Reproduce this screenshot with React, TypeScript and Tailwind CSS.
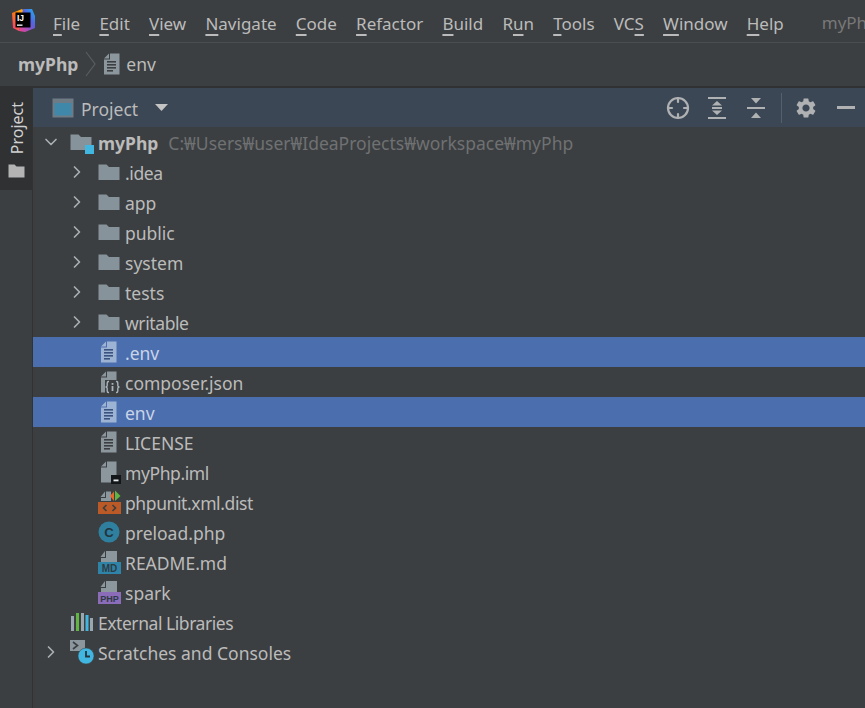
import type { ReactNode } from 'react'
import { Crosshair, ChevronDown, ChevronRight } from 'lucide-react'
import { MdSettings } from 'react-icons/md'

const menus: [string, string, string][] = [
  ['', 'F', 'ile'],
  ['', 'E', 'dit'],
  ['', 'V', 'iew'],
  ['', 'N', 'avigate'],
  ['', 'C', 'ode'],
  ['', 'R', 'efactor'],
  ['', 'B', 'uild'],
  ['R', 'u', 'n'],
  ['', 'T', 'ools'],
  ['VC', 'S', ''],
  ['', 'W', 'indow'],
  ['', 'H', 'elp'],
]

function Logo() {
  return (
    <svg width="24" height="24" viewBox="0 0 24 24">
      <defs>
        <linearGradient id="lg1" x1="0" y1="1" x2="1" y2="0">
          <stop offset="0" stopColor="#fc2f8f" />
          <stop offset="0.5" stopColor="#f97a12" />
          <stop offset="1" stopColor="#fdc80e" />
        </linearGradient>
        <linearGradient id="lg2" x1="0" y1="1" x2="1" y2="0">
          <stop offset="0" stopColor="#fc3f8f" />
          <stop offset="0.6" stopColor="#5a5fe0" />
          <stop offset="1" stopColor="#18b6f0" />
        </linearGradient>
      </defs>
      <path d="M1 5 L11 1 L14 4 L8 23 L2 20 Z" fill="url(#lg1)" />
      <path d="M8 23 L12 1 L21 1 L24 8 L24 20 L14 24 Z" fill="url(#lg2)" />
      <rect x="4.5" y="4.5" width="15" height="15" fill="#000" />
      <text x="6" y="12.5" fontSize="8.5" fontWeight="700" fill="#fff" fontFamily="'Liberation Sans', sans-serif">IJ</text>
      <rect x="6" y="16.5" width="5.5" height="1.3" fill="#fff" />
    </svg>
  )
}

function Folder({ color = '#87939a' }: { color?: string }) {
  return (
    <svg width="22" height="18" viewBox="0 0 22 18">
      <path d="M0.5 1.5 H8.5 L11 4 H21.5 V17 H0.5 Z" fill={color} />
    </svg>
  )
}

function PageBase({ children, color = '#8b969d' }: { children?: ReactNode; color?: string }) {
  return (
    <svg width="24" height="24" viewBox="0 0 24 24">
      <path d="M8 1.5 V6.5 H3 Z" fill={color} />
      <path d="M9 1.5 H18.5 V22.5 H3 V7.5 H9 Z" fill={color} />
      {children}
    </svg>
  )
}

function TextFile({ selected }: { selected?: boolean }) {
  const line = selected ? '#39527f' : '#3c3f41'
  return (
    <PageBase color={selected ? '#9db3d3' : '#8b969d'}>
      <rect x="6" y="9" width="9" height="1.6" fill={line} />
      <rect x="6" y="12" width="9" height="1.6" fill={line} />
      <rect x="6" y="15" width="9" height="1.6" fill={line} />
      <rect x="6" y="18" width="6" height="1.6" fill={line} />
    </PageBase>
  )
}

function JsonFile() {
  return (
    <svg width="24" height="24" viewBox="0 0 24 24">
      <path d="M8 1.5 V6.5 H3 Z" fill="#8b969d" />
      <path d="M9 1.5 H18.5 V10 H8 V22.5 H3 V7.5 H9 Z" fill="#8b969d" />
      <rect x="7" y="10" width="17" height="14" fill="#3c3f41" />
      <path d="M11 11.5 H10.5 Q9.2 11.5 9.2 13 V15.5 Q9.2 17 7.5 17 Q9.2 17 9.2 18.5 V21 Q9.2 22.5 10.5 22.5 H11 M18 11.5 H18.5 Q19.8 11.5 19.8 13 V15.5 Q19.8 17 21.5 17 Q19.8 17 19.8 18.5 V21 Q19.8 22.5 18.5 22.5 H18" stroke="#a9b4bb" strokeWidth="1.4" fill="none" />
      <rect x="13.6" y="13" width="1.8" height="1.8" fill="#a9b4bb" />
      <rect x="13.6" y="16" width="1.8" height="5" fill="#a9b4bb" />
    </svg>
  )
}

function ImlFile() {
  return (
    <PageBase>
      <rect x="13" y="15" width="10" height="9" fill="#14171a" />
      <rect x="15.5" y="19.5" width="5" height="1.8" fill="#e8e8e8" />
    </PageBase>
  )
}

function XmlFile() {
  return (
    <svg width="24" height="24" viewBox="0 0 24 24">
      <path d="M7 1.5 V7 H2.5 Z" fill="#8b969d" />
      <path d="M8 1.5 H13 V11 H3 V8 H8 Z" fill="#8b969d" />
      <path d="M12 6 L16 1.5 V11 Z" fill="#e8672b" />
      <path d="M17 0.5 L22.5 6 L17 11 Z" fill="#62b543" />
      <rect x="0" y="12" width="23" height="12" fill="#bb5a26" />
      <path d="M8.5 15 L5.5 18 L8.5 21 M14.5 15 L17.5 18 L14.5 21" stroke="#3c3f41" strokeWidth="1.6" fill="none" />
    </svg>
  )
}

function ClassFile() {
  return (
    <svg width="24" height="24" viewBox="0 0 24 24">
      <circle cx="11" cy="12" r="10.5" fill="#2f7f9e" />
      <text x="11" y="16.5" textAnchor="middle" fontSize="13" fontWeight="700" fill="#23343f" fontFamily="'Liberation Sans', sans-serif">C</text>
    </svg>
  )
}

function BadgeFile({ label, color, size }: { label: string; color: string; size: number }) {
  return (
    <svg width="24" height="24" viewBox="0 0 24 24">
      <path d="M7 1 V7 H2.5 Z" fill="#8b969d" />
      <path d="M8 1 H19 V12 H3 V8 H8 Z" fill="#8b969d" />
      <rect x="0" y="12" width="23" height="12" fill={color} />
      <text x="11.5" y="22" textAnchor="middle" fontSize={size} fontWeight="700" fill="#2d3b45" fontFamily="'Liberation Sans', sans-serif">{label}</text>
    </svg>
  )
}

function Libraries() {
  return (
    <svg width="24" height="24" viewBox="0 0 24 24">
      <rect x="1" y="6" width="3" height="15" fill="#9aa7b0" />
      <rect x="6" y="3" width="3" height="18" fill="#62b543" />
      <rect x="11" y="3" width="3" height="18" fill="#9aa7b0" />
      <rect x="15.5" y="5" width="3" height="16" fill="#40b6e0" />
      <rect x="20" y="8" width="3" height="13" fill="#9aa7b0" />
    </svg>
  )
}

function Scratches() {
  return (
    <svg width="26" height="26" viewBox="0 0 26 26">
      <path d="M1 1 H16 V12 H1 Z" fill="#8b969d" />
      <path d="M4 3 L8.5 6.5 L4 10" stroke="#3c3f41" strokeWidth="1.6" fill="none" />
      <circle cx="17" cy="17" r="8" fill="#40b6e0" stroke="#3c3f41" strokeWidth="0.5" />
      <path d="M17 12 V17.5 H21" stroke="#23343f" strokeWidth="1.8" fill="none" />
    </svg>
  )
}

const rows: { name: string; icon: ReactNode; selected?: boolean; folder?: boolean; tight?: boolean }[] = [
  { name: '.idea', icon: <Folder />, folder: true, tight: true },
  { name: 'app', icon: <Folder />, folder: true },
  { name: 'public', icon: <Folder />, folder: true },
  { name: 'system', icon: <Folder />, folder: true },
  { name: 'tests', icon: <Folder />, folder: true },
  { name: 'writable', icon: <Folder />, folder: true, tight: true },
  { name: '.env', icon: <TextFile selected />, selected: true },
  { name: 'composer.json', icon: <JsonFile /> },
  { name: 'env', icon: <TextFile selected />, selected: true },
  { name: 'LICENSE', icon: <TextFile /> },
  { name: 'myPhp.iml', icon: <ImlFile />, tight: true },
  { name: 'phpunit.xml.dist', icon: <XmlFile />, tight: true },
  { name: 'preload.php', icon: <ClassFile /> },
  { name: 'README.md', icon: <BadgeFile label="MD" color="#2f83a6" size={10} /> },
  { name: 'spark', icon: <BadgeFile label="PHP" color="#8a6cb8" size={9} /> },
]

export default function App() {
  return (
    <div className="w-[865px] h-[708px] overflow-hidden flex flex-col bg-[#3c3f41] text-[#bbbbbb] text-[17.5px] leading-[24px] font-['Noto_Sans','Open_Sans',sans-serif]">
      {/* menu bar */}
      <div className="h-[43px] shrink-0 flex items-center border-b border-[#4b4e50] pl-[11px] whitespace-nowrap overflow-hidden">
        <div className="w-[24px] h-[24px] mr-[18px] -mt-[2px]"><Logo /></div>
        <div className="flex gap-[19.2px] mt-[5px] text-[17px]">
          {menus.map(([pre, key, post]) => (
            <span key={key + post + pre}>
              {pre}
              <span className="underline decoration-2 underline-offset-[4px]">{key}</span>
              {post}
            </span>
          ))}
        </div>
        <span className="ml-[38px] text-[#787878] mt-[4px] text-[17px]">myPh</span>
      </div>

      {/* breadcrumb */}
      <div className="h-[45px] shrink-0 flex items-center pl-[18px] pb-[2px] border-b-2 border-[#2f3133]">
        <span className="font-bold">myPhp</span>
        <svg width="14" height="26" viewBox="0 0 14 26" className="ml-[6px] mr-[3px]">
          <path d="M2 1 L11 13 L2 25" stroke="#5a5d5f" strokeWidth="1.2" fill="none" />
        </svg>
        <TextFile />
        <span className="ml-[1px]">env</span>
      </div>

      <div className="flex-1 flex min-h-0">
        {/* tool window stripe */}
        <div className="w-[33px] shrink-0 border-r border-[#323232]">
          <div className="h-[102px] bg-[#2f3133] flex flex-col items-center pt-[14px] pl-[2px]">
            <span className="[writing-mode:vertical-rl] rotate-180 text-[16px] leading-[18px] text-[#d0d0d0]">Project</span>
            <svg width="17" height="14" viewBox="0 0 17 14" className="mt-[10px] -ml-[2px]">
              <path d="M0.5 0.5 H6.5 L8.5 2.5 H16.5 V13.5 H0.5 Z" fill="#b4b4b4" />
            </svg>
          </div>
        </div>

        <div className="flex-1 min-w-0 flex flex-col">
          {/* project header */}
          <div className="h-[39px] shrink-0 flex items-center bg-[#3b4754] pl-[19px] pr-[10px]">
            <svg width="22" height="20" viewBox="0 0 22 20" className="mr-[7px]">
              <rect x="0.5" y="0.5" width="21" height="19" fill="#6e7b85" />
              <rect x="2.5" y="5" width="17" height="12.5" fill="#3f88aa" />
            </svg>
            <span className="mt-[2px]">Project</span>
            <svg width="13" height="7" viewBox="0 0 13 7" className="ml-[17px]">
              <path d="M0 0 H13 L6.5 7 Z" fill="#c4c4c4" />
            </svg>
            <div className="ml-auto flex items-center text-[#afb1b3]">
              <Crosshair size={24} strokeWidth={2.2} />
              <svg width="20" height="22" viewBox="0 0 20 22" className="ml-[17px]">
                <rect x="1" y="0" width="18" height="2" fill="#afb1b3" />
                <rect x="1" y="20" width="18" height="2" fill="#afb1b3" />
                <rect x="5" y="10" width="10" height="2" fill="#afb1b3" />
                <path d="M10 4 L15 8.5 H5 Z M10 18 L15 13.5 H5 Z" fill="#afb1b3" />
              </svg>
              <svg width="20" height="22" viewBox="0 0 20 22" className="ml-[19px]">
                <rect x="1" y="10" width="18" height="2" fill="#afb1b3" />
                <path d="M5 1 H15 L10 6.5 Z M5 21 H15 L10 15.5 Z" fill="#afb1b3" />
              </svg>
              <div className="w-px h-[30px] bg-[#55606b] ml-[15px]" />
              <MdSettings size={24} className="ml-[12px]" />
              <div className="w-[18px] h-[2.5px] bg-[#afb1b3] ml-[19px]" />
            </div>
          </div>

          {/* tree */}
          <div className="flex-1">
            <div className="h-[30px] flex items-center">
              <ChevronDown size={20} className="ml-[8px] text-[#a9b0b5]" strokeWidth={2} />
              <div className="relative ml-[9px] w-[22px] h-[18px]">
                <Folder />
                <div className="absolute right-[-2px] bottom-[-3px] w-[9px] h-[9px] bg-[#40b6e0]" />
              </div>
              <span className="font-bold ml-[6px] mt-[2px]">myPhp</span>
              <span className="ml-[10px] mt-[2px] text-[#6f7173]">C:₩Users₩user₩IdeaProjects₩workspace₩myPhp</span>
            </div>
            {rows.map(row => (
              <div key={row.name} className={`h-[30px] flex items-center ${row.selected ? 'bg-[#4b6eaf]' : ''}`}>
                <div className="w-[35px] ml-[34px] shrink-0 flex items-center">
                  {row.folder && <ChevronRight size={20} className="text-[#a9b0b5]" strokeWidth={2} />}
                </div>
                <div className="w-[27px] -ml-[4px] shrink-0 flex items-center justify-start">
                  {row.icon}
                </div>
                <span className={`mt-[2px] ${row.tight ? 'tracking-[-0.4px]' : ''} ${row.selected ? 'text-[#c9d4e6]' : ''}`}>{row.name}</span>
              </div>
            ))}
            <div className="h-[30px] flex items-center pl-[37px]">
              <Libraries />
              <span className="ml-[4px] mt-[2px] tracking-[-0.45px]">External Libraries</span>
            </div>
            <div className="h-[30px] flex items-center">
              <ChevronRight size={20} className="ml-[8px] text-[#a9b0b5]" strokeWidth={2} />
              <div className="ml-[8px] w-[26px] h-[26px]"><Scratches /></div>
              <span className="ml-[3px] mt-[2px]">Scratches and Consoles</span>
            </div>
          </div>
        </div>
      </div>
    </div>
  )
}
